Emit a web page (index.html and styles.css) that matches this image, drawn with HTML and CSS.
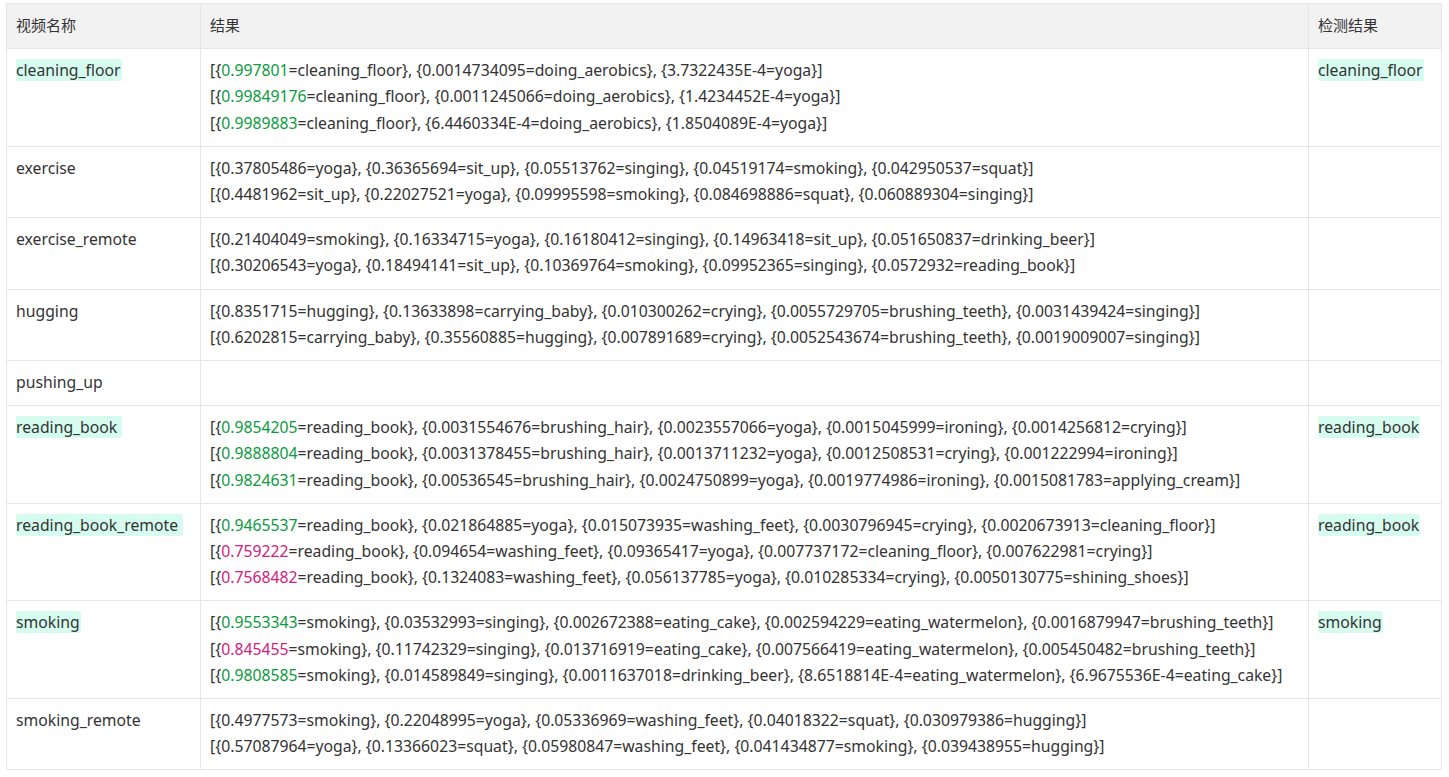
FILE: index.html
```html
<!DOCTYPE html>
<html lang="zh-CN">
<head>
    <meta charset="UTF-8">
    <title>检测结果</title>
    <link rel="stylesheet" href="styles.css">
</head>
<body>
    <div class="wrap">
        <table class="result-table">
            <colgroup>
                <col class="col-name">
                <col>
                <col class="col-check">
            </colgroup>
            <thead>
                <tr>
                    <th>视频名称</th>
                    <th>结果</th>
                    <th>检测结果</th>
                </tr>
            </thead>
            <tbody>
                <tr>
                    <td><span class="hit">cleaning_floor</span></td>
                    <td>
                        <div>[{<span class="ok">0.997801</span>=cleaning_floor}, {0.0014734095=doing_aerobics}, {3.7322435E-4=yoga}]</div>
                        <div>[{<span class="ok">0.99849176</span>=cleaning_floor}, {0.0011245066=doing_aerobics}, {1.4234452E-4=yoga}]</div>
                        <div>[{<span class="ok">0.9989883</span>=cleaning_floor}, {6.4460334E-4=doing_aerobics}, {1.8504089E-4=yoga}]</div>
                    </td>
                    <td><span class="hit">cleaning_floor</span></td>
                </tr>
                <tr>
                    <td>exercise</td>
                    <td>
                        <div>[{0.37805486=yoga}, {0.36365694=sit_up}, {0.05513762=singing}, {0.04519174=smoking}, {0.042950537=squat}]</div>
                        <div>[{0.4481962=sit_up}, {0.22027521=yoga}, {0.09995598=smoking}, {0.084698886=squat}, {0.060889304=singing}]</div>
                    </td>
                    <td></td>
                </tr>
                <tr>
                    <td>exercise_remote</td>
                    <td>
                        <div>[{0.21404049=smoking}, {0.16334715=yoga}, {0.16180412=singing}, {0.14963418=sit_up}, {0.051650837=drinking_beer}]</div>
                        <div>[{0.30206543=yoga}, {0.18494141=sit_up}, {0.10369764=smoking}, {0.09952365=singing}, {0.0572932=reading_book}]</div>
                    </td>
                    <td></td>
                </tr>
                <tr>
                    <td>hugging</td>
                    <td>
                        <div>[{0.8351715=hugging}, {0.13633898=carrying_baby}, {0.010300262=crying}, {0.0055729705=brushing_teeth}, {0.0031439424=singing}]</div>
                        <div>[{0.6202815=carrying_baby}, {0.35560885=hugging}, {0.007891689=crying}, {0.0052543674=brushing_teeth}, {0.0019009007=singing}]</div>
                    </td>
                    <td></td>
                </tr>
                <tr>
                    <td>pushing_up</td>
                    <td></td>
                    <td></td>
                </tr>
                <tr>
                    <td><span class="hit">reading_book&nbsp;</span></td>
                    <td>
                        <div>[{<span class="ok">0.9854205</span>=reading_book}, {0.0031554676=brushing_hair}, {0.0023557066=yoga}, {0.0015045999=ironing}, {0.0014256812=crying}]</div>
                        <div>[{<span class="ok">0.9888804</span>=reading_book}, {0.0031378455=brushing_hair}, {0.0013711232=yoga}, {0.0012508531=crying}, {0.001222994=ironing}]</div>
                        <div>[{<span class="ok">0.9824631</span>=reading_book}, {0.00536545=brushing_hair}, {0.0024750899=yoga}, {0.0019774986=ironing}, {0.0015081783=applying_cream}]</div>
                    </td>
                    <td><span class="hit">reading_book</span></td>
                </tr>
                <tr>
                    <td><span class="hit">reading_book_remote&nbsp;</span></td>
                    <td>
                        <div>[{<span class="ok">0.9465537</span>=reading_book}, {0.021864885=yoga}, {0.015073935=washing_feet}, {0.0030796945=crying}, {0.0020673913=cleaning_floor}]</div>
                        <div>[{<span class="low">0.759222</span>=reading_book}, {0.094654=washing_feet}, {0.09365417=yoga}, {0.007737172=cleaning_floor}, {0.007622981=crying}]</div>
                        <div>[{<span class="low">0.7568482</span>=reading_book}, {0.1324083=washing_feet}, {0.056137785=yoga}, {0.010285334=crying}, {0.0050130775=shining_shoes}]</div>
                    </td>
                    <td><span class="hit">reading_book</span></td>
                </tr>
                <tr>
                    <td><span class="hit">smoking</span></td>
                    <td>
                        <div>[{<span class="ok">0.9553343</span>=smoking}, {0.03532993=singing}, {0.002672388=eating_cake}, {0.002594229=eating_watermelon}, {0.0016879947=brushing_teeth}]</div>
                        <div>[{<span class="low">0.845455</span>=smoking}, {0.11742329=singing}, {0.013716919=eating_cake}, {0.007566419=eating_watermelon}, {0.005450482=brushing_teeth}]</div>
                        <div>[{<span class="ok">0.9808585</span>=smoking}, {0.014589849=singing}, {0.0011637018=drinking_beer}, {8.6518814E-4=eating_watermelon}, {6.9675536E-4=eating_cake}]</div>
                    </td>
                    <td><span class="hit">smoking</span></td>
                </tr>
                <tr>
                    <td>smoking_remote</td>
                    <td>
                        <div>[{0.4977573=smoking}, {0.22048995=yoga}, {0.05336969=washing_feet}, {0.04018322=squat}, {0.030979386=hugging}]</div>
                        <div>[{0.57087964=yoga}, {0.13366023=squat}, {0.05980847=washing_feet}, {0.041434877=smoking}, {0.039438955=hugging}]</div>
                    </td>
                    <td></td>
                </tr>
            </tbody>
        </table>
    </div>
</body>
</html>
```

FILE: styles.css
```css
:root {
    --cor-borda: #e6e6e6;
    --cor-cabecalho: #f2f2f2;
    --cor-texto: #333;
    --cor-ok: #0a9b3d;
    --cor-baixo: #d2217c;
    --cor-destaque: #d6fcef;
}

body {
    margin: 0;
    font-family: 'Noto Sans', 'Noto Sans CJK SC', sans-serif;
    font-size: 15.75px;
    color: var(--cor-texto);
    background-color: white;
}

.wrap {
    padding: 3px 7px 0 6px;
}

.result-table {
    width: 100%;
    border-collapse: collapse;
    table-layout: fixed;
}

.col-name {
    width: 194px;
}

.col-check {
    width: 133px;
}

.result-table th,
.result-table td {
    border: 1px solid var(--cor-borda);
    padding: 8px 9px 10px 9px;
    line-height: 26.2px;
    text-align: left;
    vertical-align: top;
    white-space: nowrap;
    font-weight: normal;
}

.result-table th {
    background-color: var(--cor-cabecalho);
    font-size: 15px;
}

.hit {
    background-color: var(--cor-destaque);
    border-radius: 2px;
    padding: 0 1px 0 0;
}

.ok {
    color: var(--cor-ok);
}

.low {
    color: var(--cor-baixo);
}
```
